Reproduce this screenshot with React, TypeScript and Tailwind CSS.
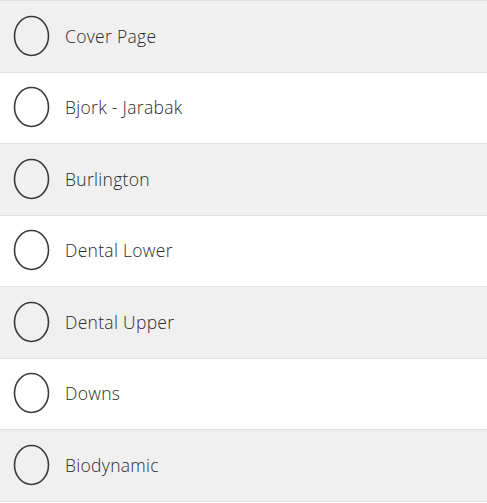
import React from "react";

const items = [
  "Cover Page",
  "Bjork - Jarabak",
  "Burlington",
  "Dental Lower",
  "Dental Upper",
  "Downs",
  "Biodynamic",
];

export default function App() {
  return (
    <div
      className="w-[487px] h-[503px] overflow-hidden bg-white border-t border-[#e2e2e2]"
      style={{ fontFamily: '"Open Sans", sans-serif' }}
    >
      {items.map((label, i) => (
        <div
          key={label}
          className={`flex items-center h-[71.5px] border-b border-[#e2e2e2] ${
            i % 2 === 0 ? "bg-[#f0f0f0]" : "bg-white"
          }`}
        >
          <svg width="37" height="42" viewBox="0 0 37 42" className="ml-[13px] shrink-0 -mt-[1px]">
            <ellipse cx="18.5" cy="21" rx="17" ry="19.5" fill="none" stroke="#3a3a3a" strokeWidth="1.6" />
          </svg>
          <span className="ml-[15px] -mt-[1px] text-[17.5px] font-light text-[#2a2a2a] tracking-[0.3px] whitespace-nowrap">{label}</span>
        </div>
      ))}
    </div>
  );
}
